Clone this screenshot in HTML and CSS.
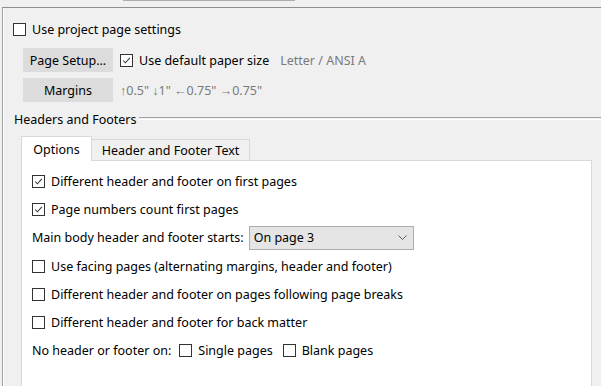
FILE: index.html
```html
<!DOCTYPE html>
<html>
<head>
<meta charset="utf-8">
<link rel="stylesheet" href="styles.css">
</head>
<body>
<div class="stub"></div>
<div class="frame">
  <div class="row first">
    <span class="cb"></span><span class="lbl">Use project page settings</span>
  </div>
  <div class="row btnrow">
    <div class="btn">Page Setup...</div>
    <span class="cb checked"><svg viewBox="0 0 13 13"><path d="M2.5 6.5 L5.2 9.2 L10.5 3.5"/></svg></span>
    <span class="lbl">Use default paper size</span>
    <span class="muted paper">Letter / ANSI A</span>
  </div>
  <div class="row btnrow second">
    <div class="btn">Margins</div>
    <span class="muted">↑0.5" ↓1" ←0.75" →0.75"</span>
  </div>
  <div class="legend">
    <span class="legend-text">Headers and Footers</span>
    <span class="legend-line"></span>
  </div>
  <div class="tabs">
    <div class="tab active">Options</div>
    <div class="tab">Header and Footer Text</div>
  </div>
  <div class="panel">
    <div class="prow"><span class="cb checked"><svg viewBox="0 0 13 13"><path d="M2.5 6.5 L5.2 9.2 L10.5 3.5"/></svg></span><span class="lbl">Different header and footer on first pages</span></div>
    <div class="prow"><span class="cb checked"><svg viewBox="0 0 13 13"><path d="M2.5 6.5 L5.2 9.2 L10.5 3.5"/></svg></span><span class="lbl">Page numbers count first pages</span></div>
    <div class="prow selrow"><span class="plain">Main body header and footer starts:</span>
      <div class="select"><span>On page 3</span><svg class="chev" viewBox="0 0 9 5"><path d="M0.5 0.5 L4.5 4.5 L8.5 0.5"/></svg></div>
    </div>
    <div class="prow"><span class="cb"></span><span class="lbl">Use facing pages (alternating margins, header and footer)</span></div>
    <div class="prow"><span class="cb"></span><span class="lbl">Different header and footer on pages following page breaks</span></div>
    <div class="prow"><span class="cb"></span><span class="lbl">Different header and footer for back matter</span></div>
    <div class="prow"><span class="plain wide">No header or footer on:</span><span class="cb"></span><span class="lbl">Single pages</span><span class="cb gapcb"></span><span class="lbl">Blank pages</span></div>
  </div>
</div>
</body>
</html>
```
FILE: styles.css
```css
html, body {
  margin: 0;
  padding: 0;
  background: #f0f0f0;
  height: 386px;
  overflow: hidden;
}
body {
  font-family: "Segoe UI", "Noto Sans", "Open Sans", sans-serif;
  font-size: 12.5px;
  color: #000;
}
.stub {
  height: 1px;
  width: 172px;
  margin-left: 123px;
  background: #adadad;
}
.frame {
  margin-top: 6px;
  margin-left: 2px;
  border-top: 1px solid #8e8e8e;
  border-left: 1px solid #a0a0a0;
  box-shadow: inset 1px 0 0 #ffffff;
  height: 379px;
  box-sizing: border-box;
  overflow: hidden;
  padding-left: 10px;
}
.row {
  display: flex;
  align-items: center;
}
.first {
  margin-top: 15px;
  height: 13px;
}
.cb {
  width: 11px;
  height: 11px;
  border: 1px solid #333333;
  background: #ffffff;
  flex: none;
  display: inline-flex;
}
.cb svg {
  width: 11px;
  height: 11px;
}
.cb svg path {
  fill: none;
  stroke: #333333;
  stroke-width: 1.2;
}
.lbl {
  margin-left: 6px;
  white-space: nowrap;
}
.btnrow {
  margin-top: 12px;
  margin-left: 10px;
  height: 24px;
}
.btnrow.second {
  margin-top: 6px;
}
.btn {
  width: 90px;
  height: 24px;
  background: #dcdcdc;
  display: flex;
  align-items: center;
  justify-content: center;
  margin-right: 7px;
  flex: none;
}
.muted {
  color: #7a7a7a;
  white-space: nowrap;
}
.paper {
  margin-left: 11px;
}
.legend {
  display: flex;
  align-items: center;
  margin-left: 1px;
  margin-top: 9px;
  height: 16px;
}
.legend-text {
  white-space: nowrap;
  padding-right: 3px;
}
.legend-line {
  flex: 1;
  height: 1px;
  border-top: 1px solid #a0a0a0;
  border-bottom: 1px solid #ffffff;
  margin-top: -2px;
}
.tabs {
  display: flex;
  align-items: flex-end;
  margin-left: 8px;
  margin-top: 9px;
  height: 24px;
}
.tab {
  height: 21px;
  display: flex;
  align-items: center;
  justify-content: center;
  border: 1px solid #d9d9d9;
  border-bottom: none;
  border-left: none;
  background: #f0f0f0;
  white-space: nowrap;
  width: 158px;
  box-sizing: border-box;
  padding-top: 1px;
}
.tab.active {
  background: #ffffff;
  border-left: 1px solid #d9d9d9;
  width: 71px;
  position: relative;
  z-index: 1;
  margin-bottom: -1px;
  height: 25px;
  padding-top: 0;
}
.panel {
  margin-left: 8px;
  width: 571px;
  box-sizing: border-box;
  background: #ffffff;
  border: 1px solid #d9d9d9;
  height: 240px;
  padding-top: 6px;
  padding-left: 10px;
}
.prow {
  display: flex;
  align-items: center;
  height: 28px;
}
.prow.selrow {
  height: 29px;
}
.plain {
  white-space: nowrap;
  margin-right: 5px;
}
.plain.wide {
  margin-right: 8px;
}
.select {
  border: 1px solid #adadad;
  background: #e5e5e5;
  display: flex;
  align-items: center;
  justify-content: space-between;
  padding: 0 6px 0 4px;
  box-sizing: border-box;
  width: 165px;
  height: 24px;
}
.chev {
  width: 9px;
  height: 5px;
}
.chev path {
  fill: none;
  stroke: #606060;
  stroke-width: 1;
}
.gapcb {
  margin-left: 10px;
}
```
